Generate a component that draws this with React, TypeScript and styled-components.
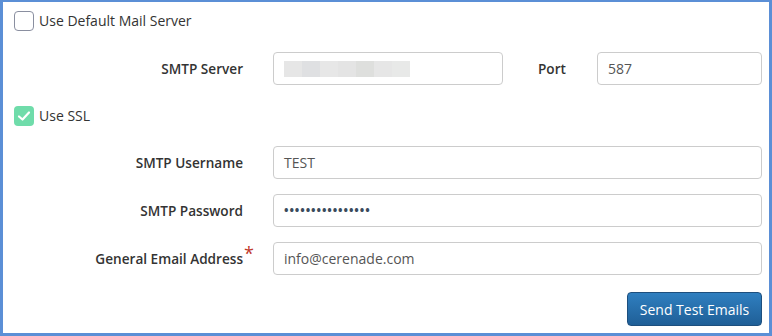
import { FC } from 'react';
import styled, { createGlobalStyle } from 'styled-components';

const GlobalStyle = createGlobalStyle`
  html, body {
    margin: 0;
    padding: 0;
    background: #ffffff;
  }
  body {
    font-family: 'Open Sans', 'Liberation Sans', sans-serif;
    font-size: 14px;
    color: #333333;
  }
`;

const colors = {
  frame: '#5b8fd6',
  text: '#333333',
  inputText: '#555555',
  inputBorder: '#cccccc',
  boxBorder: '#8a8fa0',
  green: '#6fdcaa',
  required: '#c0392b',
};

const StyledFrame = styled.div`
  width: 772px;
  height: 336px;
  box-sizing: border-box;
  border: 3px solid ${colors.frame};
  border-top-width: 2px;
  padding: 9px 7px 0 11px;
  display: flex;
  flex-direction: column;
`;

const StyledCheckRow = styled.label<{ $gap: number }>`
  display: flex;
  align-items: center;
  gap: 5px;
  height: 20px;
  line-height: 20px;
  margin-bottom: ${({ $gap }) => $gap}px;
  color: ${colors.text};
  cursor: pointer;
`;

const StyledBox = styled.span<{ $checked?: boolean }>`
  width: 20px;
  height: 20px;
  box-sizing: border-box;
  border-radius: 4px;
  display: flex;
  align-items: center;
  justify-content: center;
  border: ${({ $checked }) => ($checked ? 'none' : `1px solid ${colors.boxBorder}`)};
  background: ${({ $checked }) => ($checked ? colors.green : '#ffffff')};
`;

const StyledField = styled.div<{ $gap: number }>`
  display: grid;
  grid-template-columns: 229px 1fr;
  column-gap: 30px;
  align-items: center;
  height: 33px;
  margin-bottom: ${({ $gap }) => $gap}px;
`;

const StyledLabel = styled.div`
  position: relative;
  justify-self: end;
  font-size: 13.6px;
  font-weight: 600;
  color: ${colors.text};
  white-space: nowrap;
`;

const StyledRequired = styled.span`
  position: absolute;
  left: 100%;
  top: -5px;
  margin-left: 1px;
  color: ${colors.required};
  font-size: 18px;
  font-weight: 400;
  line-height: 1;
`;

const StyledInput = styled.div<{ $width?: number }>`
  height: 33px;
  box-sizing: border-box;
  border: 1px solid ${colors.inputBorder};
  border-radius: 4px;
  padding: 0 10px;
  display: flex;
  align-items: center;
  color: ${colors.inputText};
  flex: ${({ $width }) => ($width ? `0 0 ${$width}px` : '1 1 auto')};
  background: #ffffff;
`;

const StyledInline = styled.div`
  display: flex;
  align-items: center;
`;

const StyledInlineLabel = styled(StyledLabel)`
  margin: 0 31px 0 35px;
`;

const StyledBlur = styled.span`
  display: block;
  width: 126px;
  height: 16px;
  background: linear-gradient(
    90deg,
    #e6e6e6 0 18px,
    #dfe0e2 18px 36px,
    #e7e7e7 36px 54px,
    #e4e4e4 54px 72px,
    #dedfdd 72px 90px,
    #e6e6e6 90px 108px,
    #e8e9e8 108px 126px
  );
`;

const StyledDots = styled.span`
  font-size: 12px;
  font-weight: 700;
  letter-spacing: 0.9px;
  color: #3a4a5c;
`;

const StyledActions = styled.div`
  display: flex;
  justify-content: flex-end;
`;

const StyledButton = styled.button`
  height: 34px;
  width: 135px;
  border: 1px solid #1d4f7e;
  border-radius: 4px;
  background: linear-gradient(180deg, #2f7fc0 0%, #1f5f97 100%);
  color: #ffffff;
  font-family: 'Open Sans', 'Liberation Sans', sans-serif;
  font-size: 14px;
  padding: 0;
  cursor: pointer;
`;

const Check: FC = () => (
  <svg width="14" height="12" viewBox="0 0 14 12">
    <path d="M2 6.5 L5.5 9.5 L12 2.5" fill="none" stroke="#ffffff" strokeWidth="2.2" strokeLinecap="round" strokeLinejoin="round" />
  </svg>
);

export default function App() {
  return (
    <>
      <GlobalStyle />
      <StyledFrame>
        <StyledCheckRow $gap={21}>
          <StyledBox />
          Use Default Mail Server
        </StyledCheckRow>
        <StyledField $gap={21}>
          <StyledLabel>SMTP Server</StyledLabel>
          <StyledInline>
            <StyledInput $width={230}>
              <StyledBlur />
            </StyledInput>
            <StyledInlineLabel>Port</StyledInlineLabel>
            <StyledInput>587</StyledInput>
          </StyledInline>
        </StyledField>
        <StyledCheckRow $gap={20}>
          <StyledBox $checked>
            <Check />
          </StyledBox>
          Use SSL
        </StyledCheckRow>
        <StyledField $gap={15}>
          <StyledLabel>SMTP Username</StyledLabel>
          <StyledInput>TEST</StyledInput>
        </StyledField>
        <StyledField $gap={15}>
          <StyledLabel>SMTP Password</StyledLabel>
          <StyledInput>
            <StyledDots>••••••••••••••••</StyledDots>
          </StyledInput>
        </StyledField>
        <StyledField $gap={17}>
          <StyledLabel>
            General Email Address<StyledRequired>*</StyledRequired>
          </StyledLabel>
          <StyledInput>info@cerenade.com</StyledInput>
        </StyledField>
        <StyledActions>
          <StyledButton>Send Test Emails</StyledButton>
        </StyledActions>
      </StyledFrame>
    </>
  );
}
